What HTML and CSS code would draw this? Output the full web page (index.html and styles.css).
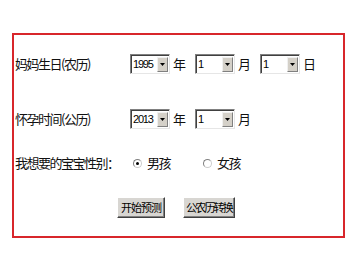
FILE: index.html
```html
<!DOCTYPE html>
<html lang="zh-CN">
<head>
<meta charset="utf-8">
<title>生男生女预测</title>
<link rel="stylesheet" href="styles.css">
</head>
<body>
<div class="frame">
  <div class="row">
    <span class="label">妈妈生日(农历)</span>
    <span class="sel"><span class="val">1995</span><span class="arr"><svg width="5" height="3" viewBox="0 0 5 3"><path d="M0 0H5L2.5 3Z" fill="#000"/></svg></span></span>
    <span class="unit">年</span>
    <span class="sel"><span class="val">1</span><span class="arr"><svg width="5" height="3" viewBox="0 0 5 3"><path d="M0 0H5L2.5 3Z" fill="#000"/></svg></span></span>
    <span class="unit">月</span>
    <span class="sel"><span class="val">1</span><span class="arr"><svg width="5" height="3" viewBox="0 0 5 3"><path d="M0 0H5L2.5 3Z" fill="#000"/></svg></span></span>
    <span class="unit">日</span>
  </div>
  <div class="row row2">
    <span class="label">怀孕时间(公历)</span>
    <span class="sel"><span class="val">2013</span><span class="arr"><svg width="5" height="3" viewBox="0 0 5 3"><path d="M0 0H5L2.5 3Z" fill="#000"/></svg></span></span>
    <span class="unit">年</span>
    <span class="sel"><span class="val">1</span><span class="arr"><svg width="5" height="3" viewBox="0 0 5 3"><path d="M0 0H5L2.5 3Z" fill="#000"/></svg></span></span>
    <span class="unit">月</span>
  </div>
  <div class="row row3">
    <span class="label">我想要的宝宝性别：</span>
    <span class="opt"><span class="radio checked"></span><span class="otext">男孩</span></span>
    <span class="opt opt2"><span class="radio"></span><span class="otext">女孩</span></span>
  </div>
  <div class="btns">
    <span class="btn b1">开始预测</span>
    <span class="btn b2">公农历转换</span>
  </div>
</div>
</body>
</html>
```

FILE: styles.css
```css
html, body {
  margin: 0;
  padding: 0;
  background: #fff;
}
body {
  font-family: "Noto Sans CJK SC", "Liberation Sans", sans-serif;
  color: #111;
}
.frame {
  margin: 33px 0 0 12px;
  width: 333px;
  height: 205px;
  box-sizing: border-box;
  border: 2px solid #d8262b;
  padding: 19px 0 0 1px;
}
.row {
  display: flex;
  align-items: center;
  height: 20px;
}
.row2 { margin-top: 35px; }
.row3 { margin-top: 24px; }
.label {
  width: 115px;
  flex: none;
  font-size: 13px;
  letter-spacing: -1.5px;
  white-space: nowrap;
  line-height: 20px;
}
.sel {
  display: flex;
  align-items: center;
  width: 40px;
  height: 20px;
  box-sizing: border-box;
  border-top: 1px solid #808080;
  border-left: 1px solid #808080;
  border-bottom: 1px solid #e6e6e6;
  border-right: 1px solid #e6e6e6;
  box-shadow: inset 1px 1px 0 #404040;
  background: #fff;
  padding: 1px 1px 1px 2px;
}
.val {
  flex: 1;
  font-family: "Liberation Sans", sans-serif;
  font-size: 11px;
  letter-spacing: -1.2px;
  color: #000;
  line-height: 16px;
}
.arr {
  width: 11px;
  height: 15px;
  box-sizing: border-box;
  background: #d4d0c8;
  border-top: 1px solid #f0f0f0;
  border-left: 1px solid #f0f0f0;
  border-bottom: 1px solid #808080;
  border-right: 1px solid #808080;
  display: flex;
  align-items: center;
  justify-content: center;
}
.unit {
  font-size: 13px;
  margin: 0 9px 0 3px;
  line-height: 20px;
}
.opt {
  display: flex;
  align-items: center;
  margin-left: 3px;
}
.opt2 { margin-left: 33px; }
.radio {
  width: 9px;
  height: 9px;
  box-sizing: border-box;
  border: 1px solid #808080;
  border-right-color: #ccc;
  border-bottom-color: #ccc;
  border-radius: 50%;
  background: #fff;
  display: flex;
  align-items: center;
  justify-content: center;
}
.radio.checked::after {
  content: "";
  width: 3px;
  height: 3px;
  border-radius: 50%;
  background: #000;
}
.otext {
  font-size: 13px;
  letter-spacing: -1.5px;
  margin-left: 5px;
  line-height: 20px;
}
.btns {
  display: flex;
  margin-top: 24px;
  padding-left: 102px;
  gap: 18px;
}
.btn {
  height: 21px;
  box-sizing: border-box;
  background: #d8d6d2;
  border-top: 1px solid #fff;
  border-left: 1px solid #fff;
  border-bottom: 1px solid #404040;
  border-right: 1px solid #404040;
  box-shadow: inset -1px -1px 0 #808080;
  font-size: 11px;
  letter-spacing: -1px;
  white-space: nowrap;
  color: #000;
  display: flex;
  align-items: center;
  justify-content: center;
  line-height: 1;
}
.b1 { width: 48px; }
.b2 { width: 52px; letter-spacing: -1.8px; }
```
